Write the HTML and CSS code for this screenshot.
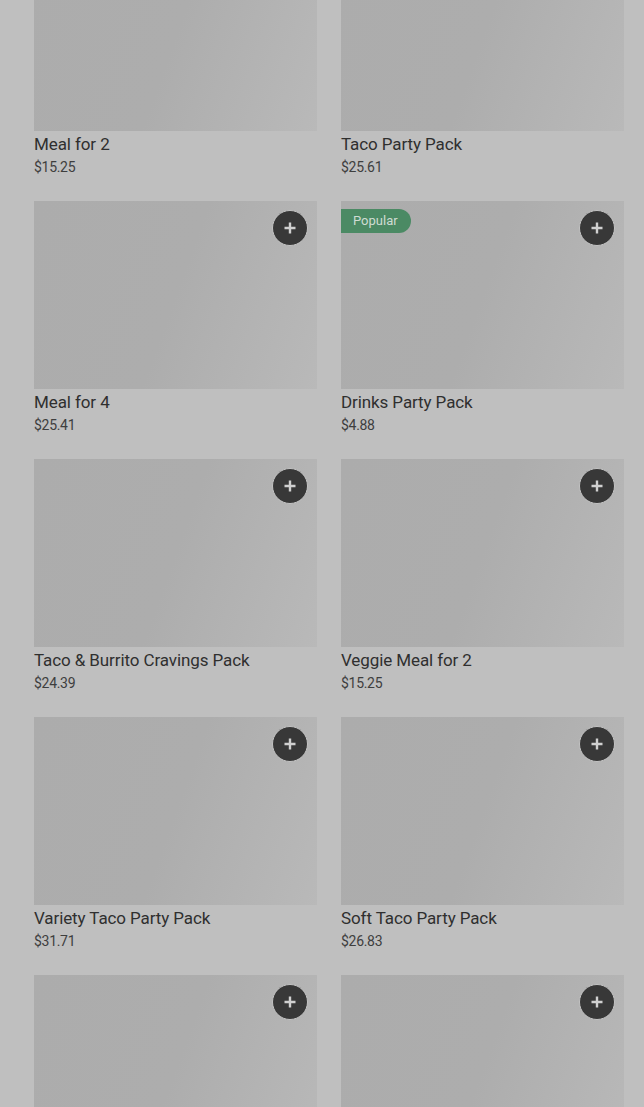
FILE: index.html
```html
<!DOCTYPE html>
<html>
<head>
<meta charset="utf-8">
<link rel="stylesheet" href="styles.css">
</head>
<body>
<div class="grid">
  <div class="card"><div class="img"></div><div class="title">Meal for 2</div><div class="price">$15.25</div></div>
  <div class="card"><div class="img"></div><div class="title">Taco Party Pack</div><div class="price">$25.61</div></div>
  <div class="card"><div class="img"><button class="add"><svg viewBox="0 0 14 14" width="14" height="14"><path d="M7 1.5v11M1.5 7h11" stroke="#d0d0d0" stroke-width="2.4"/></svg></button></div><div class="title">Meal for 4</div><div class="price">$25.41</div></div>
  <div class="card"><div class="img"><span class="badge">Popular</span><button class="add"><svg viewBox="0 0 14 14" width="14" height="14"><path d="M7 1.5v11M1.5 7h11" stroke="#d0d0d0" stroke-width="2.4"/></svg></button></div><div class="title">Drinks Party Pack</div><div class="price">$4.88</div></div>
  <div class="card"><div class="img"><button class="add"><svg viewBox="0 0 14 14" width="14" height="14"><path d="M7 1.5v11M1.5 7h11" stroke="#d0d0d0" stroke-width="2.4"/></svg></button></div><div class="title">Taco &amp; Burrito Cravings Pack</div><div class="price">$24.39</div></div>
  <div class="card"><div class="img"><button class="add"><svg viewBox="0 0 14 14" width="14" height="14"><path d="M7 1.5v11M1.5 7h11" stroke="#d0d0d0" stroke-width="2.4"/></svg></button></div><div class="title">Veggie Meal for 2</div><div class="price">$15.25</div></div>
  <div class="card"><div class="img"><button class="add"><svg viewBox="0 0 14 14" width="14" height="14"><path d="M7 1.5v11M1.5 7h11" stroke="#d0d0d0" stroke-width="2.4"/></svg></button></div><div class="title">Variety Taco Party Pack</div><div class="price">$31.71</div></div>
  <div class="card"><div class="img"><button class="add"><svg viewBox="0 0 14 14" width="14" height="14"><path d="M7 1.5v11M1.5 7h11" stroke="#d0d0d0" stroke-width="2.4"/></svg></button></div><div class="title">Soft Taco Party Pack</div><div class="price">$26.83</div></div>
  <div class="card"><div class="img"><button class="add"><svg viewBox="0 0 14 14" width="14" height="14"><path d="M7 1.5v11M1.5 7h11" stroke="#d0d0d0" stroke-width="2.4"/></svg></button></div></div>
  <div class="card"><div class="img"><button class="add"><svg viewBox="0 0 14 14" width="14" height="14"><path d="M7 1.5v11M1.5 7h11" stroke="#d0d0d0" stroke-width="2.4"/></svg></button></div></div>
</div>
</body>
</html>
```
FILE: styles.css
```css
html, body {
  margin: 0;
  padding: 0;
  background: #bfbfbf;
  overflow: hidden;
  height: 1107px;
}
body {
  font-family: Roboto, "Liberation Sans", sans-serif;
}
.grid {
  display: grid;
  grid-template-columns: 283px 283px;
  column-gap: 24px;
  row-gap: 24px;
  padding-left: 34px;
  margin-top: -57px;
}
.card {
  display: flex;
  flex-direction: column;
}
.img {
  position: relative;
  height: 188px;
  background: linear-gradient(110deg, #acacac 0%, #adadad 50%, #b9b9b9 100%);
}
.title {
  margin-top: 2px;
  font-size: 17px;
  line-height: 22px;
  color: #2f2f2f;
  letter-spacing: -0.1px;
}
.price {
  margin-top: 2px;
  font-size: 14px;
  line-height: 20px;
  color: #3e3e3e;
  letter-spacing: -0.3px;
}
.add {
  position: absolute;
  top: 9px;
  right: 9px;
  width: 36px;
  height: 36px;
  border-radius: 50%;
  border: 1px solid #c4c4c4;
  background: #383838;
  padding: 0;
  display: flex;
  align-items: center;
  justify-content: center;
}
.badge {
  position: absolute;
  top: 8px;
  left: 0;
  height: 24px;
  padding: 0 13px 0 12px;
  border-radius: 0 12px 12px 0;
  background: #4b8a64;
  color: #cfdcd3;
  font-size: 13px;
  line-height: 24px;
}
```
